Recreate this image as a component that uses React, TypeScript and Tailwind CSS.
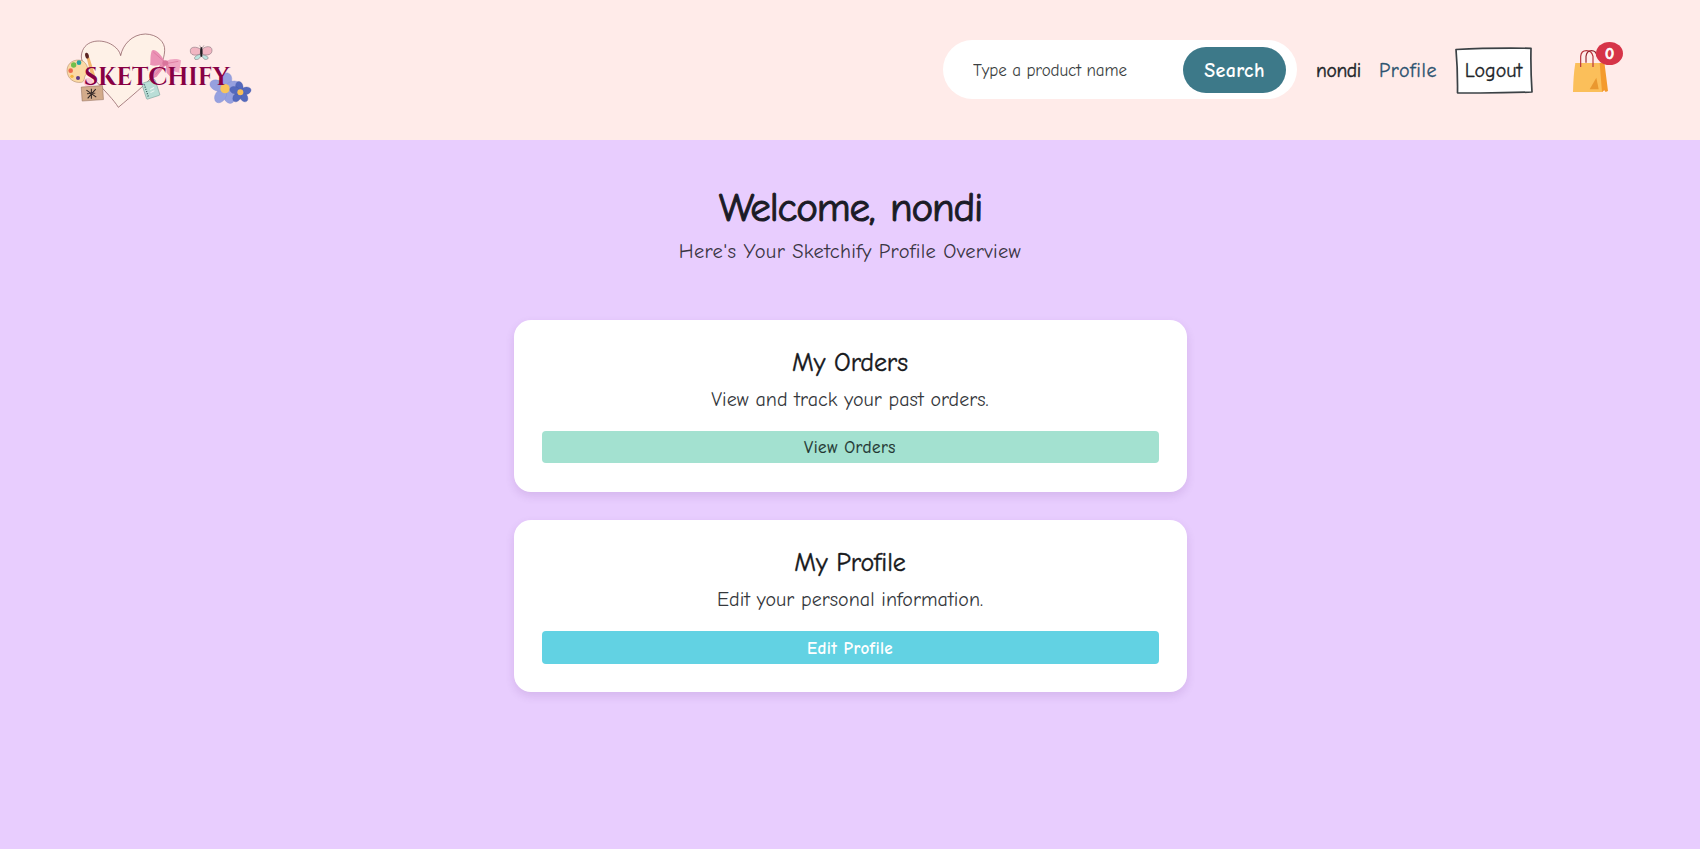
import React from "react";

function Logo() {
  return (
    <svg viewBox="0 0 660 300" className="h-[100px] w-[220px] shrink-0" aria-label="Sketchify">
      <path
        d="M205 262C180 220 92 150 94 108C98 60 150 55 182 72C200 82 209 94 212 107C218 75 245 43 286 42C322 43 346 66 344 92C341 150 290 190 205 262Z"
        fill="#fef1e7" stroke="#7d4a50" strokeWidth="2"
      />
      <path d="M96 122C74 115 51 128 51 152C52 177 73 190 94 187C107 184 100 171 108 164C119 154 112 128 96 122Z" fill="#fbd9a4" stroke="#a77e5c" strokeWidth="1.5" />
      <circle cx="71" cy="135" r="8" fill="#6fbf4b" />
      <circle cx="87" cy="128" r="7" fill="#27a3a0" />
      <circle cx="62" cy="152" r="7" fill="#ee6a4e" />
      <circle cx="84" cy="174" r="6" fill="#5c3a86" />
      <circle cx="66" cy="169" r="5" fill="#f5b63f" />
      <path d="M110 114L118 112L137 172L126 177Z" fill="#f3b76f" />
      <ellipse cx="111" cy="107" rx="5.500" ry="9" fill="#5b2522" transform="rotate(-12 111 107)" />
      <ellipse cx="115" cy="187" rx="14" ry="13" fill="#fbc9d6" />
      <g transform="rotate(-4 127 220)">
        <rect x="95" y="199" width="64" height="42" fill="#d3ab8b" stroke="#8d6a55" strokeWidth="1.500" />
        <path d="M110 209L138 232M138 208L112 234M125 206L123 236M111 220H136" stroke="#2c2222" strokeWidth="3" fill="none" />
      </g>
      <path d="M345 125C330 98 311 84 305 93C299 110 303 128 300 134C315 141 332 135 345 128Z" fill="#eb92b5" />
      <path d="M346 125C362 115 382 116 393 121C392 139 386 149 389 158C371 158 356 143 346 130Z" fill="#f0a7c3" />
      <path d="M338 128L303 166L306 176L320 170L347 135ZM347 132L350 158L365 175L373 165L355 133Z" fill="#e98daf" />
      <path d="M310 96L342 124M385 124L353 130M343 134L316 164" stroke="#d87097" strokeWidth="2" />
      <ellipse cx="346" cy="129" rx="9" ry="8" fill="#d9759c" />
      <g transform="rotate(-18 299 207)">
        <rect x="281" y="184" width="42" height="50" rx="3" fill="#baded7" stroke="#6f9992" strokeWidth="1.500" />
        <path d="M288 189V230" stroke="#315c59" strokeWidth="4" strokeDasharray="3 4" />
        <path d="M298 218L311 216M300 209L313 207" stroke="#eff8f5" strokeWidth="3" />
      </g>
      <g stroke="#75636c" strokeWidth="1.500">
        <path d="M452 88C439 78 420 80 421 92C420 105 434 109 451 102Z" fill="#f1b6c2" />
        <path d="M456 88C468 76 486 78 486 90C487 103 473 109 457 102Z" fill="#f1b6c2" />
        <path d="M450 103C439 106 430 112 435 118C445 121 451 113 453 107ZM457 105C467 106 478 110 473 117C463 122 458 113 456 107Z" fill="#bce5df" />
        <path d="M454 86L449 76M455 86L462 76" fill="none" />
      </g>
      <ellipse cx="454" cy="96" rx="3.500" ry="15" fill="#211b20" />
      <g fill="#96a0df" stroke="#7f8bd0" strokeWidth="1">
        <ellipse cx="525" cy="181" rx="16" ry="23" transform="rotate(10 525 206)" />
        <ellipse cx="525" cy="181" rx="16" ry="23" transform="rotate(75 525 206)" />
        <ellipse cx="525" cy="181" rx="16" ry="23" transform="rotate(154 525 206)" />
        <ellipse cx="525" cy="181" rx="16" ry="23" transform="rotate(212 525 206)" />
        <ellipse cx="525" cy="181" rx="16" ry="23" transform="rotate(292 525 206)" />
      </g>
      <circle cx="525" cy="206" r="14" fill="#f8c55d" />
      <g fill="#5469bd" stroke="#4458a8" strokeWidth="1">
        <ellipse cx="571" cy="200" rx="11" ry="16" transform="rotate(-10 571 217)" />
        <ellipse cx="571" cy="200" rx="11" ry="16" transform="rotate(75 571 217)" />
        <ellipse cx="571" cy="200" rx="11" ry="16" transform="rotate(145 571 217)" />
        <ellipse cx="571" cy="200" rx="11" ry="16" transform="rotate(215 571 217)" />
        <ellipse cx="571" cy="200" rx="11" ry="16" transform="rotate(290 571 217)" />
      </g>
      <circle cx="571" cy="217" r="9" fill="#f8be57" />
      <text x="102" y="196" fontFamily="Cinzel, 'Liberation Serif', serif" fontWeight="700" fontSize="79" fill="#870044" textLength="437" lengthAdjust="spacingAndGlyphs">
        SKETCHIFY
      </text>
    </svg>
  );
}

function BagIcon() {
  return (
    <svg viewBox="0 0 108 135" className="h-[45px] w-9">
      <path d="M7 45H83L89 132H0C1 102 2 74 7 45Z" fill="#fbbf5a" />
      <path d="M80 45L94 42L105 129L98 132L94 127L87 132Z" fill="#f49a2d" />
      <path d="M50 124L70 89L77 124Z" fill="#ea982f" />
      <path d="M23 57V25C25 2 55 2 60 25V57" fill="none" stroke="#b8323b" strokeWidth="3.500" />
      <path d="M39 44V25C42 2 69 2 72 25" fill="none" stroke="#96252e" strokeWidth="3.500" />
    </svg>
  );
}

function SketchBox() {
  return (
    <svg viewBox="0 0 78 47" className="absolute inset-0 -z-10 h-full w-full">
      <path d="M1 2.500Q35 .7 76 1.300Q75.500 22 77 45Q38 46.500 2.500 45.800Q2.800 23 1 2.500Z" fill="#fff" stroke="#3b4145" strokeWidth="1.700" strokeLinejoin="round" />
    </svg>
  );
}

type CardProps = { title: string; text: string; action: string; actionClass: string };

function Card({ title, text, action, actionClass }: CardProps) {
  return (
    <section className="flex h-[172px] w-[673px] flex-col items-center rounded-[17px] bg-white px-7 pt-[27px] text-center shadow-[0_4px_10px_rgba(70,20,110,0.12)]">
      <h2 className="text-[26px] leading-[33px] tracking-[-0.05px] text-[#17191c] [-webkit-text-stroke:0.4px_currentColor]">{title}</h2>
      <p className="mt-[5px] text-[20px] leading-[30px] tracking-[0.05px] text-[#35383c]">{text}</p>
      <button className={`mt-4 flex w-full items-center justify-center rounded pt-[2px] text-[17px] ${actionClass}`}>{action}</button>
    </section>
  );
}

export default function App() {
  return (
    <div className="min-h-screen bg-[#e8cdfe] font-['Comic_Neue','Comic_Sans_MS',Lato,sans-serif] text-[#202428] [font-variant-ligatures:none]">
      <header className="flex h-[140px] items-center justify-between bg-[#ffebe9] pl-[50px] pr-[77px]">
        <Logo />
        <div className="flex items-center">
          <form className="mb-px flex h-[59px] w-[354px] items-center justify-between rounded-full bg-white pl-[30px] pr-[11px]">
            <input
              aria-label="Product name"
              placeholder="Type a product name"
              className="w-[190px] bg-transparent pt-[3px] text-[17px] tracking-[-0.1px] outline-none placeholder:text-[#3c3f42]"
            />
            <button type="button" className="h-[46px] w-[103px] rounded-full bg-[#3d7989] pt-[3px] text-[20px] font-bold tracking-[0.4px] text-white">
              Search
            </button>
          </form>
          <span className="ml-[19px] w-[63px] pt-px text-[19.5px] tracking-[-0.35px] [-webkit-text-stroke:0.4px_currentColor]">nondi</span>
          <a className="w-[76px] pt-px text-[20px] tracking-[0.6px] text-[#2c526f] [-webkit-text-stroke:0.3px_currentColor]">Profile</a>
          <button className="relative isolate h-[47px] w-[78px] pr-px pt-px text-[20px] [-webkit-text-stroke:0.3px_currentColor]">
            <SketchBox />
            Logout
          </button>
          <div className="relative ml-10 w-[50px]">
            <BagIcon />
            <span className="absolute -top-[6px] left-[23px] flex h-[23px] w-[27px] items-center justify-center rounded-[50%] bg-[#d63448] pt-px text-base font-bold text-white [-webkit-text-stroke:0.7px_currentColor]">0</span>
          </div>
        </div>
      </header>
      <main className="flex flex-col items-center pt-[41px]">
        <h1 className="pl-px text-[41px] leading-[54px] tracking-[-1.15px] text-[#1b1b26] [word-spacing:3px] [-webkit-text-stroke:1px_currentColor]">Welcome, nondi</h1>
        <p className="mt-[2px] text-[20.5px] leading-[30px] tracking-[0.3px] text-[#3a3543]">Here's Your Sketchify Profile Overview</p>
        <div className="mt-[53px] flex flex-col gap-[28px]">
          <Card title="My Orders" text="View and track your past orders." action="View Orders" actionClass="h-8 bg-[#a3e1d0] text-[#20332f] tracking-[0.55px] [-webkit-text-stroke:0.2px_currentColor]" />
          <Card title="My Profile" text="Edit your personal information." action="Edit Profile" actionClass="h-[33px] bg-[#62d2e3] font-bold tracking-[0.4px] text-white" />
        </div>
      </main>
    </div>
  );
}
